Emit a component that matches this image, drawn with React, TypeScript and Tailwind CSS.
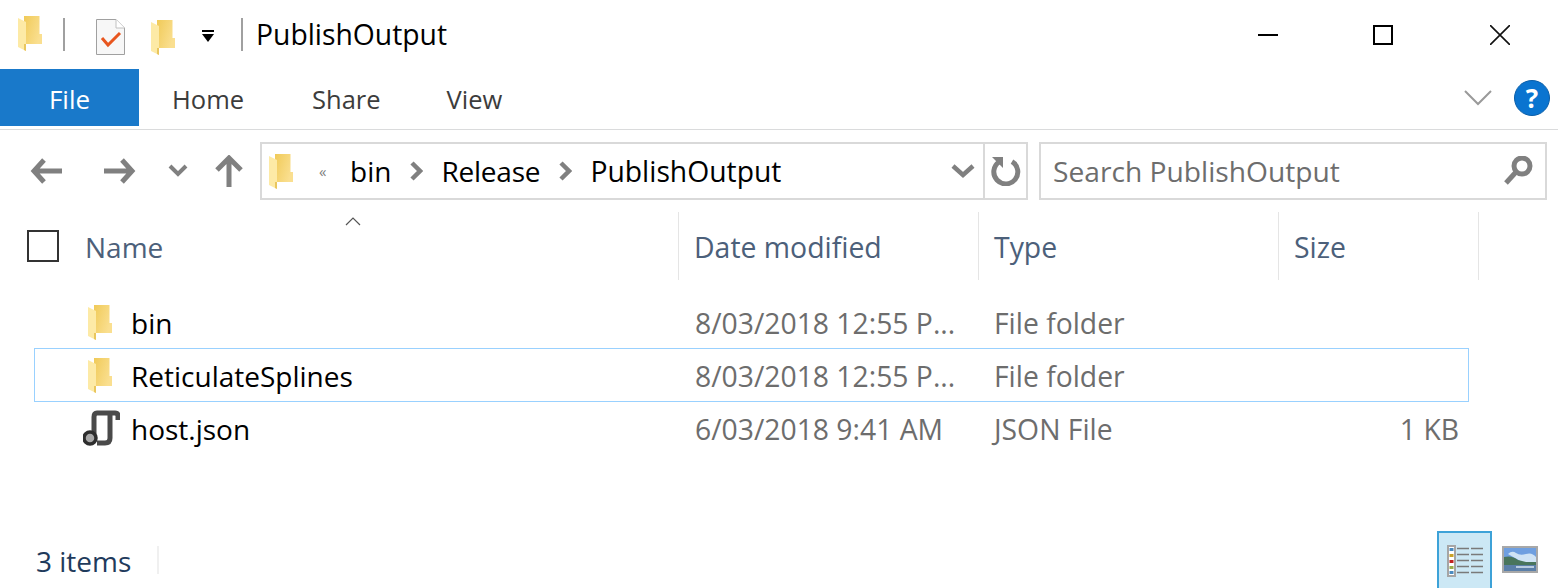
import { useId } from "react";

const font = "font-['Open_Sans','Noto_Sans',sans-serif]";

function Folder({ className }: { className: string }) {
  const id = useId();
  return (
    <svg viewBox="0 0 24 35" className={className}>
      <defs>
        <linearGradient id={id} x1="0" x2="1" y1="0" y2="0.5">
          <stop offset="0" stopColor="#f0ca58" />
          <stop offset="1" stopColor="#fadf90" />
        </linearGradient>
      </defs>
      <path d="M6 0H21.5V18H24V28H6Z" fill={`url(#${id})`} />
      <path d="M0 2L8 6V35L0 31Z" fill="#fdeaa6" />
      <path d="M8 6V35L6 34V28H8Z" fill="#e9c65e" />
    </svg>
  );
}

function TabLabel({ children, className = "" }: { children: string; className?: string }) {
  return <span className={`text-[25.5px] leading-none text-[#3c3c3c] ${className}`}>{children}</span>;
}

function Grey({ d, className, box = "0 0 32 32", sw = 5 }: { d: string; className: string; box?: string; sw?: number }) {
  return (
    <svg viewBox={box} className={className} fill="none" stroke="#808080" strokeWidth={sw}>
      <path d={d} />
    </svg>
  );
}

function Crumb() {
  return <Grey d="M2 2L10 10L2 18" box="0 0 13 20" className="mx-[18.5px] h-[20px] w-[13px]" sw={4.5} />;
}

function Row({ name, date, type, size, icon, selected }: {
  name: string; date: string; type: string; size?: string; icon: React.ReactNode; selected?: boolean;
}) {
  return (
    <div className={`ml-[34px] mr-[89px] grid h-[54px] -mt-px grid-cols-[644px_300px_300px_184px] items-center border ${selected ? "border-[#99d1ff]" : "border-transparent"}`}>
      <div className="flex items-center">
        <div className="flex w-[96px] justify-end pr-[19px]">{icon}</div>
        <span className="pt-[2px] text-[28px] leading-none text-black">{name}</span>
      </div>
      <span className="pl-[16px] pt-[2px] text-[28.3px] leading-none text-[#6d6d6d]">{date}</span>
      <span className="pl-[15px] pt-[2px] text-[28.3px] leading-none text-[#6d6d6d]">{type}</span>
      <span className="pr-[4px] pt-[2px] text-right text-[28.3px] leading-none text-[#6d6d6d]">{size}</span>
    </div>
  );
}

function HeaderCell({ children }: { children: string }) {
  return (
    <div className="flex items-center border-r border-[#e5e5e5] pl-[15px] pt-[2px] text-[28.4px] text-[#4c607a]">
      {children}
    </div>
  );
}

export default function App() {
  return (
    <div className={`flex h-[588px] w-[1558px] flex-col overflow-hidden bg-white ${font}`}>
      {/* Title bar */}
      <div className="flex h-[69px] shrink-0 items-center">
        <Folder className="ml-[18px] h-[35px] w-[24px] -translate-y-[1px]" />
        <div className="ml-[21px] h-[33px] w-[2px] bg-[#a0a0a0]" />
        <svg viewBox="0 0 29 36" className="ml-[31px] h-[36px] w-[29px] translate-y-[2px]">
          <path d="M.5.5H20L28.5 9V35.5H.5Z" fill="#f7f7f7" stroke="#a0a0a0" />
          <path d="M20 .5V9H28.5" fill="#fff" stroke="#c0c0c0" />
          <path d="M6 19L12 26L24 14" fill="none" stroke="#e8561f" strokeWidth="3" />
        </svg>
        <Folder className="ml-[26px] h-[35px] w-[24px] translate-y-[3px]" />
        <svg viewBox="0 0 14 14" className="ml-[26px] h-[14px] w-[14px] translate-y-[1px]">
          <path d="M1 1H13V3H1ZM1 5H13L7 13Z" fill="#000" />
        </svg>
        <div className="ml-[26px] h-[33px] w-[2px] bg-[#a0a0a0]" />
        <span className="ml-[13px] text-[28.3px] leading-none text-black">PublishOutput</span>
        <div className="ml-auto flex items-center">
          <div className="h-[2px] w-[20px] bg-black" />
          <div className="ml-[95px] h-[20px] w-[20px] border-2 border-black" />
          <svg viewBox="0 0 20 20" className="ml-[97px] mr-[48px] h-[20px] w-[20px]" stroke="#111" strokeWidth="1.6">
            <path d="M0 0L20 20M20 0L0 20" />
          </svg>
        </div>
      </div>

      {/* Ribbon tabs */}
      <div className="flex h-[61px] shrink-0 border-b border-[#dadbdc] pb-[3px]">
        <div className="flex h-[57px] w-[139px] items-center justify-center bg-[#1979ca] pt-[4px] text-[26px] text-white">File</div>
        <div className="ml-[33px] flex items-center gap-[68px] pt-[5px]">
          <TabLabel>Home</TabLabel>
          <TabLabel>Share</TabLabel>
          <TabLabel className="-ml-[2px]">View</TabLabel>
        </div>
        <div className="ml-auto mr-[8px] flex items-center">
          <svg viewBox="0 0 28 16" className="h-[16px] w-[28px]" fill="none" stroke="#9a9a9a" strokeWidth="2">
            <path d="M1 1L14 14L27 1" />
          </svg>
          <div className="ml-[22px] flex h-[36px] w-[36px] items-center justify-center rounded-full border border-[#0a5ea8] bg-[#0a74d0] text-[26px] font-bold leading-none text-white">?</div>
        </div>
      </div>

      {/* Navigation and address bar */}
      <div className="mt-[12px] flex h-[58px] shrink-0 items-center">
        <Grey d="M14 5L4 16L14 27M4 16H32" className="ml-[30px] h-[32px] w-[32px]" />
        <Grey d="M18 5L28 16L18 27M28 16H0" className="ml-[42px] h-[32px] w-[32px]" />
        <Grey d="M2 2L10 10L18 2" box="0 0 20 14" className="ml-[32px] h-[14px] w-[20px]" sw={4} />
        <Grey d="M3 15L15 3L27 15M15 3V32" box="0 0 30 32" className="ml-[26px] h-[32px] w-[30px]" />
        <div className="ml-[16px] flex h-[58px] w-[768px] items-center border-2 border-[#d9d9d9]">
          <Folder className="ml-[7px] h-[35px] w-[24px]" />
          <span className="ml-[26px] w-[31px] text-[15px] leading-none text-[#808080]">«</span>
          <span className="text-[28px] leading-none text-black">bin</span>
          <Crumb />
          <span className="text-[28px] leading-none tracking-[-0.2px] text-black">Release</span>
          <Crumb />
          <span className="text-[28.3px] leading-none text-black">PublishOutput</span>
          <Grey d="M2 2L12 11L22 2" box="0 0 24 15" className="ml-auto mr-[8px] h-[15px] w-[24px]" sw={4.5} />
          <div className="flex h-full w-[43px] items-center justify-center border-l-2 border-[#d9d9d9]">
            <svg viewBox="0 0 30 29" className="h-[29px] w-[30px]" fill="none" stroke="#808080" strokeWidth="5">
              <path d="M8 5A12 12 0 1 0 21 4.6" />
              <path d="M1 0H12V11Z" fill="#808080" stroke="none" />
            </svg>
          </div>
        </div>
        <div className="ml-[11px] flex h-[58px] w-[508px] items-center justify-between border-2 border-[#d9d9d9] pl-[12px] pr-[12px]">
          <span className="text-[28.2px] leading-none text-[#6d6d6d]">Search PublishOutput</span>
          <svg viewBox="0 0 30 30" className="h-[30px] w-[30px]" fill="none" stroke="#808080" strokeWidth="5">
            <circle cx="19" cy="10" r="8" />
            <path d="M13 16L3 27" />
          </svg>
        </div>
      </div>

      {/* Column headers */}
      <div className="relative mt-[12px] grid h-[68px] shrink-0 grid-cols-[679px_300px_300px_200px]">
        <svg viewBox="0 0 16 9" className="absolute left-[345px] top-[5px] h-[9px] w-[16px]" fill="none" stroke="#555" strokeWidth="1.2">
          <path d="M1 8L8 1L15 8" />
        </svg>
        <div className="flex items-center border-r border-[#e5e5e5] pt-[2px] text-[28px] text-[#4c607a]">
          <div className="ml-[27px] mr-[26px] h-[32px] w-[32px] -translate-y-[1px] border-2 border-[#333]" />
          Name
        </div>
        <HeaderCell>Date modified</HeaderCell>
        <HeaderCell>Type</HeaderCell>
        <HeaderCell>Size</HeaderCell>
      </div>

      {/* Files */}
      <div className="mt-[16px] flex-1">
        <Row name="bin" date="8/03/2018 12:55 P..." type="File folder" icon={<Folder className="h-[35px] w-[24px]" />} />
        <Row selected name="ReticulateSplines" date="8/03/2018 12:55 P..." type="File folder" icon={<Folder className="h-[35px] w-[24px]" />} />
        <Row name="host.json" date="6/03/2018 9:41 AM" type="JSON File" size="1 KB" icon={
          <svg viewBox="0 0 37 37" className="-mr-[8px] h-[37px] w-[37px]" fill="none">
            <path d="M11 24V7Q11 3 14 3H32Q35 3 35 6V10" stroke="#4a4a4a" strokeWidth="5" />
            <path d="M27 3V28Q27 33 22 33H14" stroke="#4a4a4a" strokeWidth="5" />
            <circle cx="7" cy="28" r="6" fill="#a8a8a8" stroke="#2e2e2e" strokeWidth="3.5" />
          </svg>
        } />
      </div>

      {/* Status bar */}
      <div className="flex h-[57px] shrink-0 items-center">
        <span className="ml-[36px] pt-[2px] text-[28px] leading-none text-[#1f3b5c]">3 items</span>
        <div className="ml-[26px] h-[28px] w-[2px] bg-[#f0f0f0]" />
        <div className="ml-auto flex h-full w-[55px] items-center justify-center border-x-2 border-t-2 border-[#3da2d8] bg-[#cce8f5]">
          <svg viewBox="0 0 36 32" className="h-[32px] w-[36px]" fill="none">
            <rect x="1" y="1" width="7" height="30" fill="#fff" stroke="#a5a5a5" strokeWidth="2" />
            <rect x="2.5" y="3" width="4" height="3" fill="#4a8bc0" />
            <rect x="2.5" y="9" width="4" height="3" fill="#c9a227" />
            <rect x="2.5" y="15" width="4" height="3" fill="#c0201f" />
            <rect x="2.5" y="21" width="4" height="3" fill="#9aae4a" />
            <rect x="2.5" y="26" width="4" height="3" fill="#4a8bc0" />
            <path d="M10 3.5H22M24 3.5H36M10 9.5H22M24 9.5H36M10 15.5H22M24 15.5H36M10 21.5H22M24 21.5H36M10 27.5H22M24 27.5H36" stroke="#7a7a7a" strokeWidth="1.5" />
          </svg>
        </div>
        <svg viewBox="0 0 36 27" className="ml-[10px] mr-[20px] h-[27px] w-[36px]">
          <rect x="1" y="1" width="34" height="25" fill="#fff" stroke="#a8a8a8" strokeWidth="2" />
          <rect x="2" y="2" width="32" height="14" fill="#6f9fe0" />
          <path d="M6 8Q10 4 14 7T24 8T34 11V16H20Z" fill="#cfe3f5" />
          <path d="M2 11Q10 9 16 14L24 16H34V19H2Z" fill="#49755c" />
          <rect x="2" y="19" width="32" height="6" fill="#5b7fa8" />
          <rect x="14" y="20" width="18" height="2" fill="#b8cbe0" />
        </svg>
      </div>
    </div>
  );
}
